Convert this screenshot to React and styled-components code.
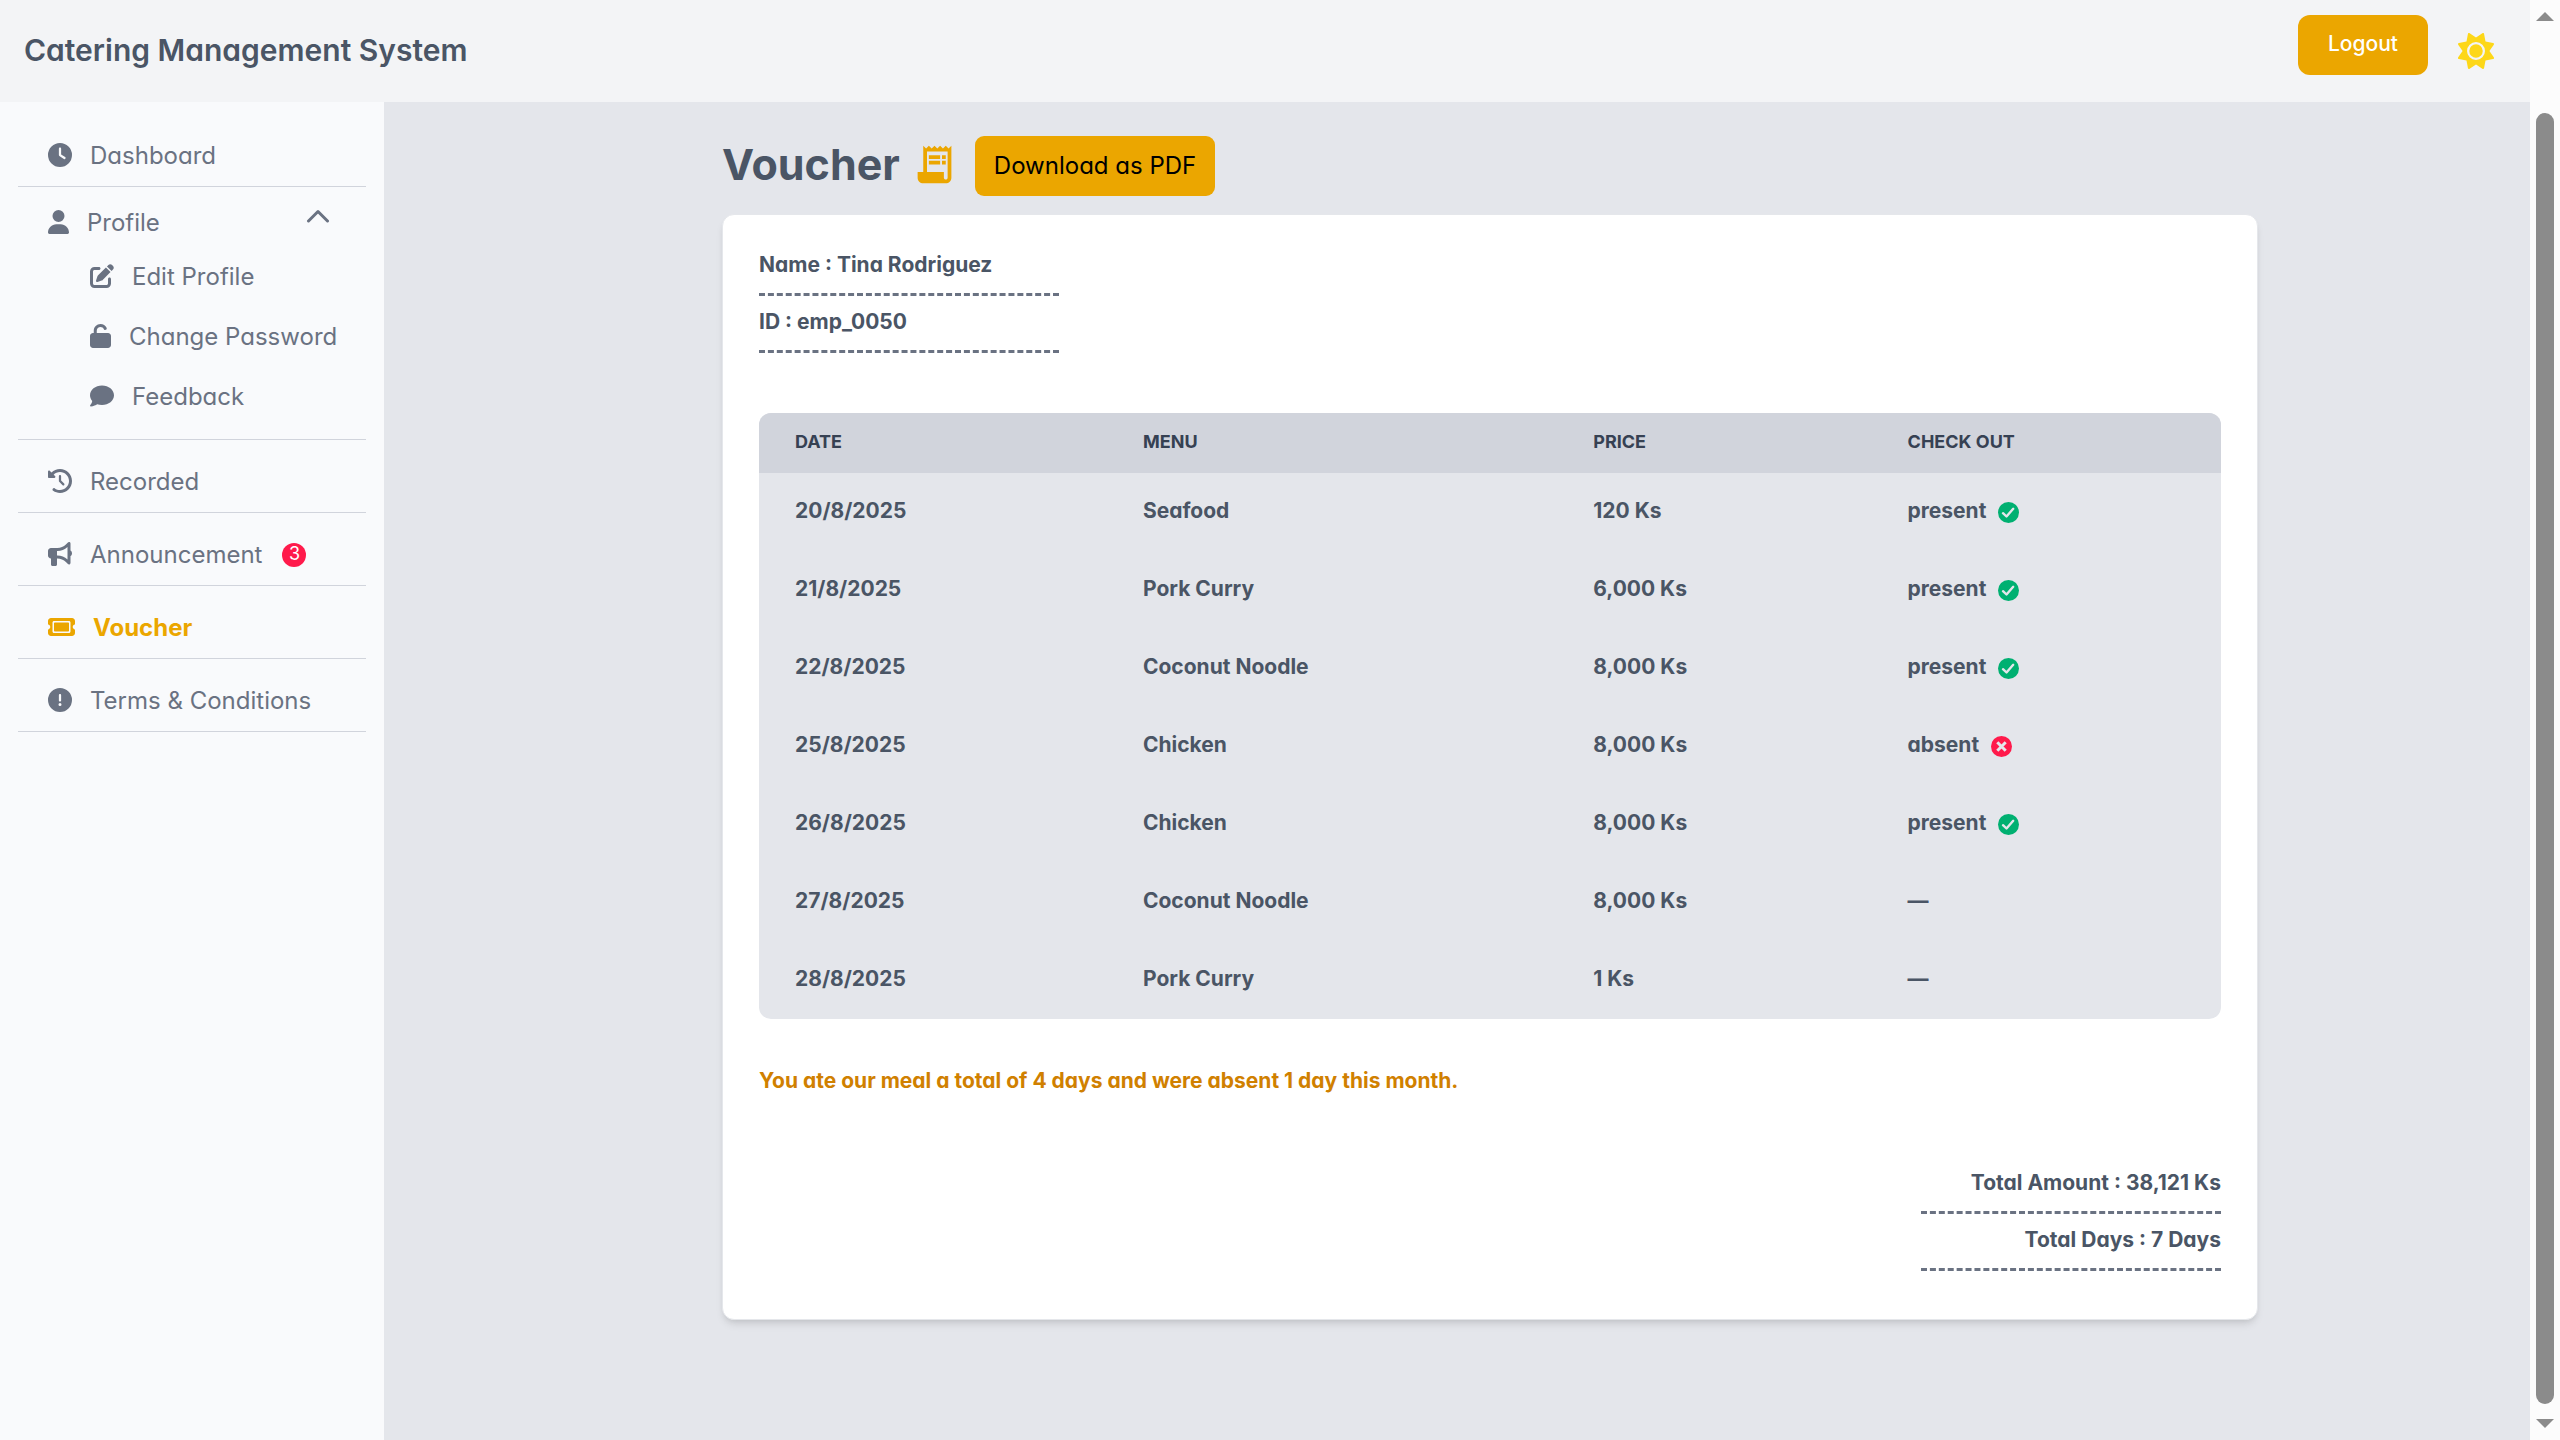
import React, { useState } from "react";
import styled, { createGlobalStyle, css } from "styled-components";
import {
  FaBullhorn,
  FaCircleExclamation,
  FaClock,
  FaClockRotateLeft,
  FaComment,
  FaPenToSquare,
  FaSun,
  FaTicket,
  FaUnlock,
  FaUser,
} from "react-icons/fa6";
import { MdReceiptLong } from "react-icons/md";

const color = {
  page: "#e4e6eb",
  header: "#f3f4f6",
  sidebar: "#f9fafc",
  line: "#d1d4dc",
  muted: "#6a7282",
  text: "#4a5565",
  strong: "#364153",
  amber: "#eba600",
  note: "#d08000",
  red: "#ff1a4b",
  green: "#00b071",
};

const GlobalStyle = createGlobalStyle`
  *, *::before, *::after { box-sizing: border-box; }
  body {
    margin: 0;
    background: ${color.page};
    color: ${color.text};
    font-family: Inter, "Liberation Sans", sans-serif;
    font-feature-settings: "cv11";
    font-size: 24px;
    line-height: 36px;
  }
  button { font: inherit; font-feature-settings: inherit; border: 0; cursor: pointer; }
  a { color: inherit; text-decoration: none; }
  h1, h2, p, ul { margin: 0; padding: 0; }
  ul { list-style: none; }
  svg { display: block; flex: none; }
`;

const Window = styled.div`
  display: grid;
  grid-template-columns: minmax(0, 1fr) 30px;
  min-height: 100vh;
`;

const Shell = styled.div`
  display: grid;
  grid-template-columns: 384px minmax(0, 1fr);
  grid-template-rows: auto 1fr;
`;

const Header = styled.header`
  grid-column: 1 / -1;
  display: flex;
  align-items: center;
  justify-content: space-between;
  padding: 15px 36px 15px 24px;
  background: ${color.header};
`;

const Brand = styled.h1`
  padding-bottom: 2px;
  font-size: 30px;
  line-height: 42px;
  font-weight: 600;
`;

const HeaderActions = styled.div`
  display: flex;
  align-items: center;
  gap: 30px;
`;

const LogoutButton = styled.button`
  height: 60px;
  margin-bottom: 12px;
  padding: 12px 30px 15px;
  border-radius: 12px;
  background: ${color.amber};
  color: #fff;
  font-size: 21px;
  line-height: 30px;
  font-weight: 500;
`;

const ThemeButton = styled.button`
  padding: 0;
  background: none;
  color: #fdd718;
  font-size: 36px;
`;

const Sidebar = styled.nav`
  padding: 12px 18px;
  background: ${color.sidebar};
  color: ${color.muted};
`;

const NavItem = styled.li`
  margin-top: 12px;
  padding-bottom: ${(p) => (p.$group ? "12px" : "0")};
  border-bottom: 1px solid ${color.line};
`;

const rowStyle = css`
  display: flex;
  align-items: center;
  gap: 18px;
`;

const NavIcon = styled.span`
  width: ${(p) => p.$width || 24}px;
  padding-bottom: 2px;
  svg {
    width: 100%;
    height: 24px;
  }
`;

const NavLink = styled.a`
  ${rowStyle}
  padding: 12px 30px;
  ${(p) => p.$active && `color: ${color.amber}; font-weight: 700;`}
`;

const SubLink = styled.a`
  ${rowStyle}
  padding: 12px 0 12px 72px;
`;

const GroupToggle = styled.button`
  ${rowStyle}
  width: 100%;
  padding: 6px 30px;
  background: none;
  color: inherit;
  text-align: left;
`;

const GroupLabel = styled.span`
  flex: 1;
`;

const Chevron = styled.span`
  padding: 0 6px 14px 0;
  svg {
    width: 24px;
    height: 14px;
    transform: ${(p) => (p.$open ? "none" : "rotate(180deg)")};
  }
`;

const Badge = styled.span`
  display: flex;
  justify-content: center;
  width: 24px;
  height: 24px;
  margin-left: 2px;
  border-radius: 50%;
  background: ${color.red};
  color: #fff;
  font-size: 18px;
  line-height: 22px;
`;

const Main = styled.main`
  padding: 34px 0 120px 66px;
`;

const Content = styled.div`
  max-width: 1536px;
  margin: 0 auto;
`;

const TitleRow = styled.div`
  display: flex;
  align-items: center;
  margin-bottom: 18px;
`;

const Title = styled.h2`
  padding-bottom: 4px;
  font-size: 43px;
  line-height: 54px;
  font-weight: 700;
`;

const TitleIcon = styled.span`
  margin: 0 18px 0 12px;
  padding-bottom: 4px;
  color: ${color.amber};
  font-size: 45px;
`;

const DownloadButton = styled.button`
  padding: 12px 19px;
  border-radius: 9px;
  background: ${color.amber};
  color: #000;
`;

const Card = styled.section`
  padding: 35px 36px 37px;
  border: 1px solid #e5e7eb;
  border-radius: 12px;
  background: #fff;
  box-shadow: 0 6px 9px -2px rgba(0, 0, 0, 0.1), 0 3px 6px -3px rgba(0, 0, 0, 0.1);
  font-size: 21px;
  line-height: 30px;
  font-weight: 700;
`;

const Facts = styled.div`
  width: 300px;
  margin-left: ${(p) => (p.$end ? "auto" : "0")};
  text-align: ${(p) => (p.$end ? "right" : "left")};
`;

const Fact = styled.p`
  margin-bottom: 11px;
  padding-bottom: 13px;
  border-bottom: 3px dashed ${color.muted};
`;

const Table = styled.table`
  width: 100%;
  margin: 60px 0 47px;
  border-collapse: collapse;
  table-layout: fixed;
  border-radius: 12px;
  overflow: hidden;
  background: ${color.page};
`;

const Th = styled.th`
  width: ${(p) => p.$width};
  padding: 14px 36px 16px;
  background: ${color.line};
  color: ${color.strong};
  font-size: 18px;
  font-weight: 700;
  text-align: left;
  text-transform: uppercase;
`;

const Td = styled.td`
  padding: 23px 36px 25px;
`;

const Status = styled.span`
  display: flex;
  align-items: center;
  gap: 12px;
  svg {
    margin-top: 3px;
    color: ${(p) => (p.$ok ? color.green : color.red)};
  }
`;

const Note = styled.p`
  margin-bottom: 72px;
  color: ${color.note};
`;

const ScrollTrack = styled.div`
  position: sticky;
  top: 0;
  display: flex;
  flex-direction: column;
  align-items: center;
  height: 100vh;
  padding: 12px 0;
  background: #fcfcfc;
  color: #8b8b8b;
`;

const ScrollThumb = styled.div`
  flex: 1;
  width: 18px;
  margin: 92px 0 15px;
  border-radius: 9px;
  background: currentColor;
`;

const columns = [
  ["Date", "23.8%"],
  ["Menu", "30.8%"],
  ["Price", "21.5%"],
  ["Check out", "23.9%"],
];

const meals = [
  ["20/8/2025", "Seafood", "120 Ks", "present"],
  ["21/8/2025", "Pork Curry", "6,000 Ks", "present"],
  ["22/8/2025", "Coconut Noodle", "8,000 Ks", "present"],
  ["25/8/2025", "Chicken", "8,000 Ks", "absent"],
  ["26/8/2025", "Chicken", "8,000 Ks", "present"],
  ["27/8/2025", "Coconut Noodle", "8,000 Ks", null],
  ["28/8/2025", "Pork Curry", "1 Ks", null],
];

function Attendance({ value }) {
  if (!value) return "—";
  const ok = value === "present";
  return (
    <Status $ok={ok}>
      {value}
      <svg width="21" height="21" viewBox="0 0 21 21" fill="none" stroke={color.page}>
        <circle cx="10.5" cy="10.5" r="10.5" fill="currentColor" stroke="none" />
        {ok ? (
          <path d="M5 11.2 8.5 14.5 15.2 6.8" strokeWidth="2.4" strokeLinecap="round" strokeLinejoin="round" />
        ) : (
          <path d="M6.3 6.3 14.7 14.7M14.7 6.3 6.3 14.7" strokeWidth="3" />
        )}
      </svg>
    </Status>
  );
}

function ProfileGroup() {
  const [open, setOpen] = useState(true);
  return (
    <NavItem $group>
      <GroupToggle type="button" aria-expanded={open} onClick={() => setOpen(!open)}>
        <NavIcon $width={21}><FaUser /></NavIcon>
        <GroupLabel>Profile</GroupLabel>
        <Chevron $open={open}>
          <svg viewBox="0 0 24 14" fill="none" stroke="currentColor" strokeWidth="3" strokeLinecap="round" strokeLinejoin="round">
            <path d="M2.5 12 12 2.5 21.5 12" />
          </svg>
        </Chevron>
      </GroupToggle>
      {open && (
        <ul>
          <li><SubLink href="#edit"><NavIcon><FaPenToSquare /></NavIcon>Edit Profile</SubLink></li>
          <li><SubLink href="#password"><NavIcon $width={21}><FaUnlock /></NavIcon>Change Password</SubLink></li>
          <li><SubLink href="#feedback"><NavIcon><FaComment /></NavIcon>Feedback</SubLink></li>
        </ul>
      )}
    </NavItem>
  );
}

export default function App() {
  return (
    <>
      <GlobalStyle />
      <Window>
        <Shell>
          <Header>
            <Brand>Catering Management System</Brand>
            <HeaderActions>
              <LogoutButton type="button">Logout</LogoutButton>
              <ThemeButton type="button" aria-label="Toggle theme"><FaSun /></ThemeButton>
            </HeaderActions>
          </Header>

          <Sidebar>
            <ul>
              <NavItem><NavLink href="#dashboard"><NavIcon><FaClock /></NavIcon>Dashboard</NavLink></NavItem>
              <ProfileGroup />
              <NavItem><NavLink href="#recorded"><NavIcon><FaClockRotateLeft /></NavIcon>Recorded</NavLink></NavItem>
              <NavItem><NavLink href="#announcement"><NavIcon><FaBullhorn /></NavIcon>Announcement<Badge>3</Badge></NavLink></NavItem>
              <NavItem><NavLink href="#voucher" $active aria-current="page"><NavIcon $width={27}><FaTicket /></NavIcon>Voucher</NavLink></NavItem>
              <NavItem><NavLink href="#terms"><NavIcon><FaCircleExclamation /></NavIcon>Terms &amp; Conditions</NavLink></NavItem>
            </ul>
          </Sidebar>

          <Main>
            <Content>
              <TitleRow>
                <Title>Voucher</Title>
                <TitleIcon><MdReceiptLong /></TitleIcon>
                <DownloadButton type="button">Download as PDF</DownloadButton>
              </TitleRow>

              <Card>
                <Facts>
                  <Fact>Name : Tina Rodriguez</Fact>
                  <Fact>ID : emp_0050</Fact>
                </Facts>

                <Table>
                  <thead>
                    <tr>
                      {columns.map(([name, width]) => (
                        <Th key={name} scope="col" $width={width}>{name}</Th>
                      ))}
                    </tr>
                  </thead>
                  <tbody>
                    {meals.map(([date, menu, price, status]) => (
                      <tr key={date}>
                        <Td>{date}</Td>
                        <Td>{menu}</Td>
                        <Td>{price}</Td>
                        <Td><Attendance value={status} /></Td>
                      </tr>
                    ))}
                  </tbody>
                </Table>

                <Note>You ate our meal a total of 4 days and were absent 1 day this month.</Note>

                <Facts $end>
                  <Fact>Total Amount : 38,121 Ks</Fact>
                  <Fact>Total Days : 7 Days</Fact>
                </Facts>
              </Card>
            </Content>
          </Main>
        </Shell>

        <ScrollTrack aria-hidden="true">
          <svg width="18" height="9" viewBox="0 0 18 9"><path d="M9 0 18 9H0z" fill="currentColor" /></svg>
          <ScrollThumb />
          <svg width="18" height="9" viewBox="0 0 18 9"><path d="M9 9 0 0h18z" fill="currentColor" /></svg>
        </ScrollTrack>
      </Window>
    </>
  );
}
